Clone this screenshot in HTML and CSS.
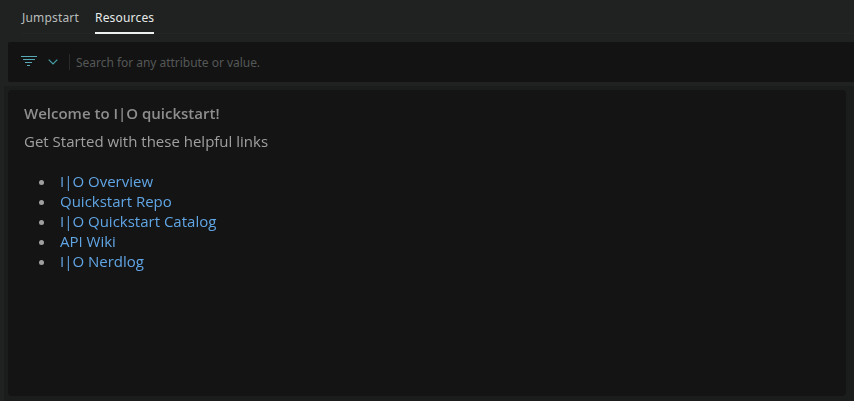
FILE: index.html
```html
<!DOCTYPE html>
<html lang="en">
<head>
<meta charset="utf-8">
<title>Resources</title>
<link rel="stylesheet" href="styles.css">
</head>
<body>
<nav class="tabs">
  <a class="tab">Jumpstart</a>
  <a class="tab active">Resources</a>
</nav>
<div class="filter-bar">
  <svg class="filter" width="16" height="10" viewBox="0 0 16 10"><path d="M0 .5h16M2 3.5h12M4 6.5h7M6 9.5h3"/></svg>
  <svg class="chevron" width="10" height="6" viewBox="0 0 10 6"><path d="M.7.7 5 5 9.3.7"/></svg>
  <span class="divider"></span>
  <span class="placeholder">Search for any attribute or value.</span>
</div>
<main class="dashboard">
  <section class="card">
    <h1>Welcome to I|O quickstart!</h1>
    <p>Get Started with these helpful links</p>
    <ul>
      <li><a>I|O Overview</a></li>
      <li><a>Quickstart Repo</a></li>
      <li><a>I|O Quickstart Catalog</a></li>
      <li><a>API Wiki</a></li>
      <li><a>I|O Nerdlog</a></li>
    </ul>
  </section>
</main>
</body>
</html>
```
FILE: styles.css
```css
* { box-sizing: border-box; }
body {
  margin: 0;
  height: 401px;
  overflow: hidden;
  display: flex;
  flex-direction: column;
  background: #1f2221;
  color: #a0a0a0;
  font-family: "Open Sans", sans-serif;
}
.tabs {
  display: flex;
  gap: 16px;
  height: 34px;
  margin-left: 22px;
  border-bottom: 1px solid #232625;
}
.tab {
  height: 34px;
  padding-top: 9px;
  font: 12px/18px "Noto Sans", sans-serif;
  letter-spacing: 0.18px;
  color: #b9bdbc;
}
.active {
  color: #e6eae9;
  border-bottom: 2px solid #edf2f0;
}
.filter-bar {
  display: flex;
  align-items: center;
  height: 40px;
  margin: 8px 0 4px 8px;
  padding-left: 13px;
  background: #131313;
  border-radius: 2px 0 0 2px;
}
svg { fill: none; stroke: #56a9b5; }
.filter { margin-bottom: 2px; }
.chevron { margin-left: 11px; stroke: #45a3aa; stroke-width: 1.2; }
.divider { width: 1px; height: 16px; margin: 0 6px 0 11px; background: #292b2a; }
.placeholder {
  padding-top: 2px;
  font: 12px/18px "Noto Sans", sans-serif;
  letter-spacing: -0.03px;
  color: #555857;
}
.dashboard {
  flex: 1;
  margin-left: 4px;
  padding: 4px 8px 5px 4px;
  background: #1b1d1c;
}
.card {
  height: 306px;
  padding: 13px 16px;
  background: #141414;
  border-radius: 4px;
  font-size: 15px;
  line-height: 20px;
  will-change: transform;
}
h1 { margin: 0 0 8px; font-size: 15px; font-weight: 600; color: #8e8e8e; }
p { margin: 0 0 20px; }
ul { margin: 0; padding-left: 32px; }
li { padding-left: 4px; }
li a { color: #60a5e4; }
```
